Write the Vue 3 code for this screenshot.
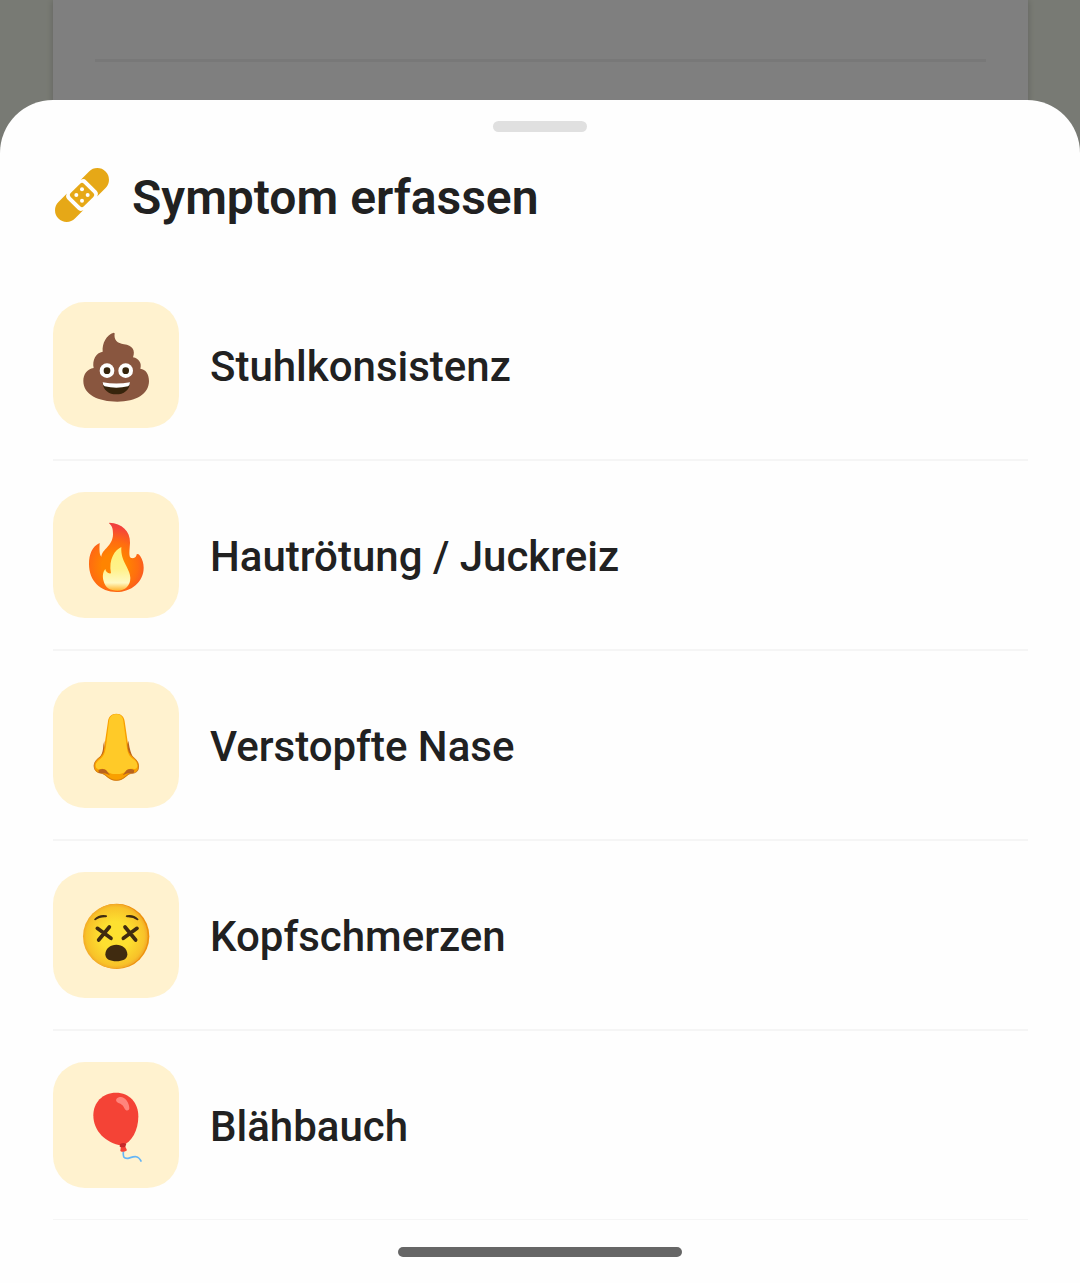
<template>
  <div class="screen">
    <div class="page" aria-hidden="true">
      <div class="page-card">
        <hr />
      </div>
      <div class="scrim"></div>
    </div>

    <main class="sheet">
      <div class="handle"></div>

      <header>
        <svg class="title-icon" viewBox="39 45 180 180" aria-hidden="true">
          <g fill="#e6a817">
            <g transform="translate(126 135) rotate(-45)">
              <path d="M29-35H65A35 35 0 0 1 65 35H29Q40 32 40 22V-22Q40-32 29-35Z" />
              <path d="M-29-35H-65A35 35 0 0 0-65 35H-29Q-40 32-40 22V-22Q-40-32-29-35Z" />
              <rect x="-28" y="-28" width="56" height="56" rx="8" />
            </g>
          </g>
          <g fill="#fff">
            <circle cx="126" cy="118" r="6" />
            <circle cx="109" cy="135" r="6" />
            <circle cx="143" cy="135" r="6" />
            <circle cx="126" cy="152" r="6" />
          </g>
        </svg>
        <h1>Symptom erfassen</h1>
      </header>

      <ul class="symptoms">
        <li v-for="symptom in symptoms" :key="symptom.id">
          <button type="button" @click="selected = symptom.id">
            <span class="tile">
              <svg viewBox="9 6 378 378" aria-hidden="true">
                <g v-if="symptom.id === 'stool'">
                  <path
                    fill="#89563f"
                    d="M191 98C169 104 156 130 158 155C138 158 126 180 131 204C112 207 100 222 100 243C100 284 145 305 202 305C258 305 297 282 297 243C297 222 287 208 271 206C276 191 267 175 249 172C257 151 247 136 222 133C202 130 191 121 194 100Z"
                  />
                  <circle cx="171" cy="212" r="22" fill="#fff" />
                  <circle cx="227" cy="212" r="22" fill="#fff" />
                  <circle cx="171" cy="212" r="10" fill="#36240c" />
                  <circle cx="227" cy="212" r="10" fill="#36240c" />
                  <path fill="#36240c" d="M158 248Q199 264 240 248C239 270 221 283 199 283S159 270 158 248Z" />
                  <path fill="#fff" d="M158 247Q199 254 240 247Q240 255 234 259Q199 267 164 259Q158 255 158 247Z" />
                </g>

                <g v-else-if="symptom.id === 'skin'">
                  <defs>
                    <radialGradient id="flame" gradientUnits="userSpaceOnUse" cx="192" cy="228" r="145">
                      <stop offset="0.25" stop-color="#ff8400" />
                      <stop offset="0.5" stop-color="#ff6d10" />
                      <stop offset="0.8" stop-color="#f4433a" />
                      <stop offset="1" stop-color="#e53945" />
                    </radialGradient>
                    <linearGradient id="core" x1="0" y1="0" x2="0" y2="1">
                      <stop offset="0" stop-color="#fff176" />
                      <stop offset="0.5" stop-color="#fff28a" />
                      <stop offset="0.82" stop-color="#fff9c4" />
                      <stop offset="1" stop-color="#ffb52e" />
                    </linearGradient>
                  </defs>
                  <path
                    fill="url(#flame)"
                    d="M178 98C216 100 241 123 240 158C239 178 235 203 244 204C255 206 259 200 260 193Q265 189 271 199C277 209 281 220 281 233C281 276 244 306 199 306C151 306 117 272 117 222C117 193 127 169 149 159C148 178 148 194 154 200C156 177 189 168 189 132C189 116 186 107 177 100Z"
                  />
                  <path
                    fill="url(#core)"
                    d="M214 171C195 180 175 207 183 250C174 252 167 245 166 237C158 246 157 260 161 274C166 294 181 302 202 302C226 302 241 287 241 264C241 235 211 215 214 171Z"
                  />
                </g>

                <g v-else-if="symptom.id === 'nose'">
                  <path
                    fill="#f9a000"
                    d="M199 101C184 101 175 111 174 124L165 185C162 211 157 225 143 236C132 245 129 258 135 270C139 279 149 279 157 281C169 286 178 302 199 302C221 302 229 286 241 281C250 279 260 279 264 270C270 257 266 243 252 233C241 222 237 209 233 185L224 124C223 111 214 101 199 101Z"
                  />
                  <path
                    fill="#ffca28"
                    d="M199 103C186 103 178 111 177 124L169 190C166 220 161 230 148 239C136 248 135 258 139 264C148 273 153 262 166 269C176 280 185 282 199 282S222 280 233 269C243 262 253 271 260 264C265 254 260 244 249 237C236 228 232 219 229 190L220 124C219 111 213 103 199 103Z"
                  />
                  <path
                    fill="#ba631c"
                    d="M163 182Q166 222 150 231Q159 221 160 195ZM235 182Q241 220 249 231Q233 221 232 195Z"
                  />
                  <path
                    fill="#ba631c"
                    d="M145 271Q157 263 168 270L180 286Q165 277 147 279ZM253 271Q241 263 230 270L218 286Q233 277 251 279Z"
                  />
                  <path
                    fill="none"
                    stroke="#ba631c"
                    stroke-width="2"
                    d="M153 229Q125 246 134 268Q140 280 158 281C171 286 179 301 199 301S227 286 240 281Q260 281 265 268Q270 246 247 229"
                  />
                </g>

                <g v-else-if="symptom.id === 'headache'">
                  <defs>
                    <radialGradient id="face">
                      <stop offset="0.45" stop-color="#fde030" />
                      <stop offset="0.9" stop-color="#f8c229" />
                      <stop offset="1" stop-color="#f2aa28" />
                    </radialGradient>
                  </defs>
                  <circle cx="200" cy="199" r="98" fill="#ee920b" />
                  <circle cx="196" cy="199" r="97" fill="url(#face)" />
                  <path
                    fill="none"
                    stroke="#402b10"
                    stroke-linecap="round"
                    stroke-width="11"
                    d="M142 175L183 205M178 171L146 210M220 205L261 175M225 171L257 210"
                  />
                  <path
                    fill="#402b10"
                    d="M133 147Q147 132 169 136Q174 140 168 142Q149 141 136 151Q131 151 133 147ZM265 147Q251 132 230 136Q224 140 231 142Q249 141 262 151Q267 151 265 147Z"
                  />
                  <path fill="#402b10" d="M199 224C181 224 166 236 166 253C166 268 181 274 199 274S232 268 232 253C232 236 217 224 199 224Z" />
                </g>

                <g v-else>
                  <path fill="none" stroke="#64b5f6" stroke-width="5" d="M220 274C219 293 222 296 234 295C247 292 263 281 274 305" />
                  <path fill="#f44336" d="M213 257L211 273Q220 279 231 271L224 256Z" />
                  <path
                    fill="#f44336"
                    d="M198 98C157 98 130 128 130 166C130 214 167 249 215 257C246 248 265 210 265 169C265 129 239 98 198 98Z"
                  />
                  <path fill="#c62828" d="M210 252Q219 247 229 251L226 260Q217 263 209 260Z" />
                  <path fill="#ff847c" d="M209 111C223 108 238 126 238 145C237 154 227 153 224 146C219 134 212 131 204 128C195 124 197 113 209 111Z" />
                </g>
              </svg>
            </span>
            <span class="label">{{ symptom.label }}</span>
          </button>
        </li>
      </ul>

      <div class="home-indicator"></div>
    </main>
  </div>
</template>

<script setup>
import { ref } from 'vue';

const selected = ref(null);

const symptoms = ref([
  { id: 'stool', label: 'Stuhlkonsistenz' },
  { id: 'skin', label: 'Hautrötung / Juckreiz' },
  { id: 'nose', label: 'Verstopfte Nase' },
  { id: 'headache', label: 'Kopfschmerzen' },
  { id: 'bloating', label: 'Blähbauch' },
]);
</script>

<style>
body {
  margin: 0;
}
</style>

<style scoped>
.screen {
  position: relative;
  box-sizing: border-box;
  min-height: 100vh;
  padding-top: 100px;
  display: flex;
  flex-direction: column;
  font-family: Roboto, "Liberation Sans", sans-serif;
  color: #212121;
}

/* dimmed page behind the sheet */
.page {
  position: absolute;
  inset: 0;
  padding: 0 52px 0 53px;
  background: #f1f5e8;
}

.page-card {
  box-sizing: border-box;
  height: 100%;
  padding: 59px 42px 0;
  background: #fff;
  box-shadow: 0 0 7px rgba(0, 0, 0, 0.2);
}

.page-card hr {
  height: 3px;
  margin: 0;
  border: none;
  background: #f0f0f0;
}

.scrim {
  position: absolute;
  inset: 0;
  background: rgba(0, 0, 0, 0.5);
}

.sheet {
  position: relative;
  flex: 1;
  display: flex;
  flex-direction: column;
  padding: 21px 0 26px;
  background: #fefefe;
  border-radius: 53px 53px 0 0;
}

.handle {
  align-self: center;
  width: 94px;
  height: 11px;
  border-radius: 6px;
  background: #e0e0e0;
}

header {
  display: flex;
  align-items: center;
  gap: 19px;
  padding: 33px 52px 46px 53px;
}

.title-icon {
  width: 60px;
  height: 60px;
  flex: none;
}

h1 {
  margin: 0;
  padding-top: 6px;
  font-size: 48px;
  line-height: 54px;
  font-weight: 600;
}

.symptoms {
  margin: 0;
  padding: 0 52px 0 53px;
  list-style: none;
}

.symptoms li {
  border-bottom: 2px solid #f5f5f5;
}

.symptoms li:last-child {
  border-bottom-width: 1px;
}

.symptoms button {
  display: flex;
  align-items: center;
  gap: 31px;
  width: 100%;
  padding: 31px 0;
  border: none;
  background: none;
  color: inherit;
  font: inherit;
  text-align: left;
  cursor: pointer;
}

.tile {
  flex: none;
  width: 126px;
  height: 126px;
  border-radius: 32px;
  background: #fff2cf;
}

.tile svg {
  display: block;
  width: 100%;
  height: 100%;
}

.label {
  padding-top: 4px;
  font-size: 42px;
  line-height: 54px;
  font-weight: 500;
}

.home-indicator {
  align-self: center;
  width: 284px;
  height: 10px;
  margin-top: auto;
  border-radius: 5px;
  background: #666;
}
</style>
